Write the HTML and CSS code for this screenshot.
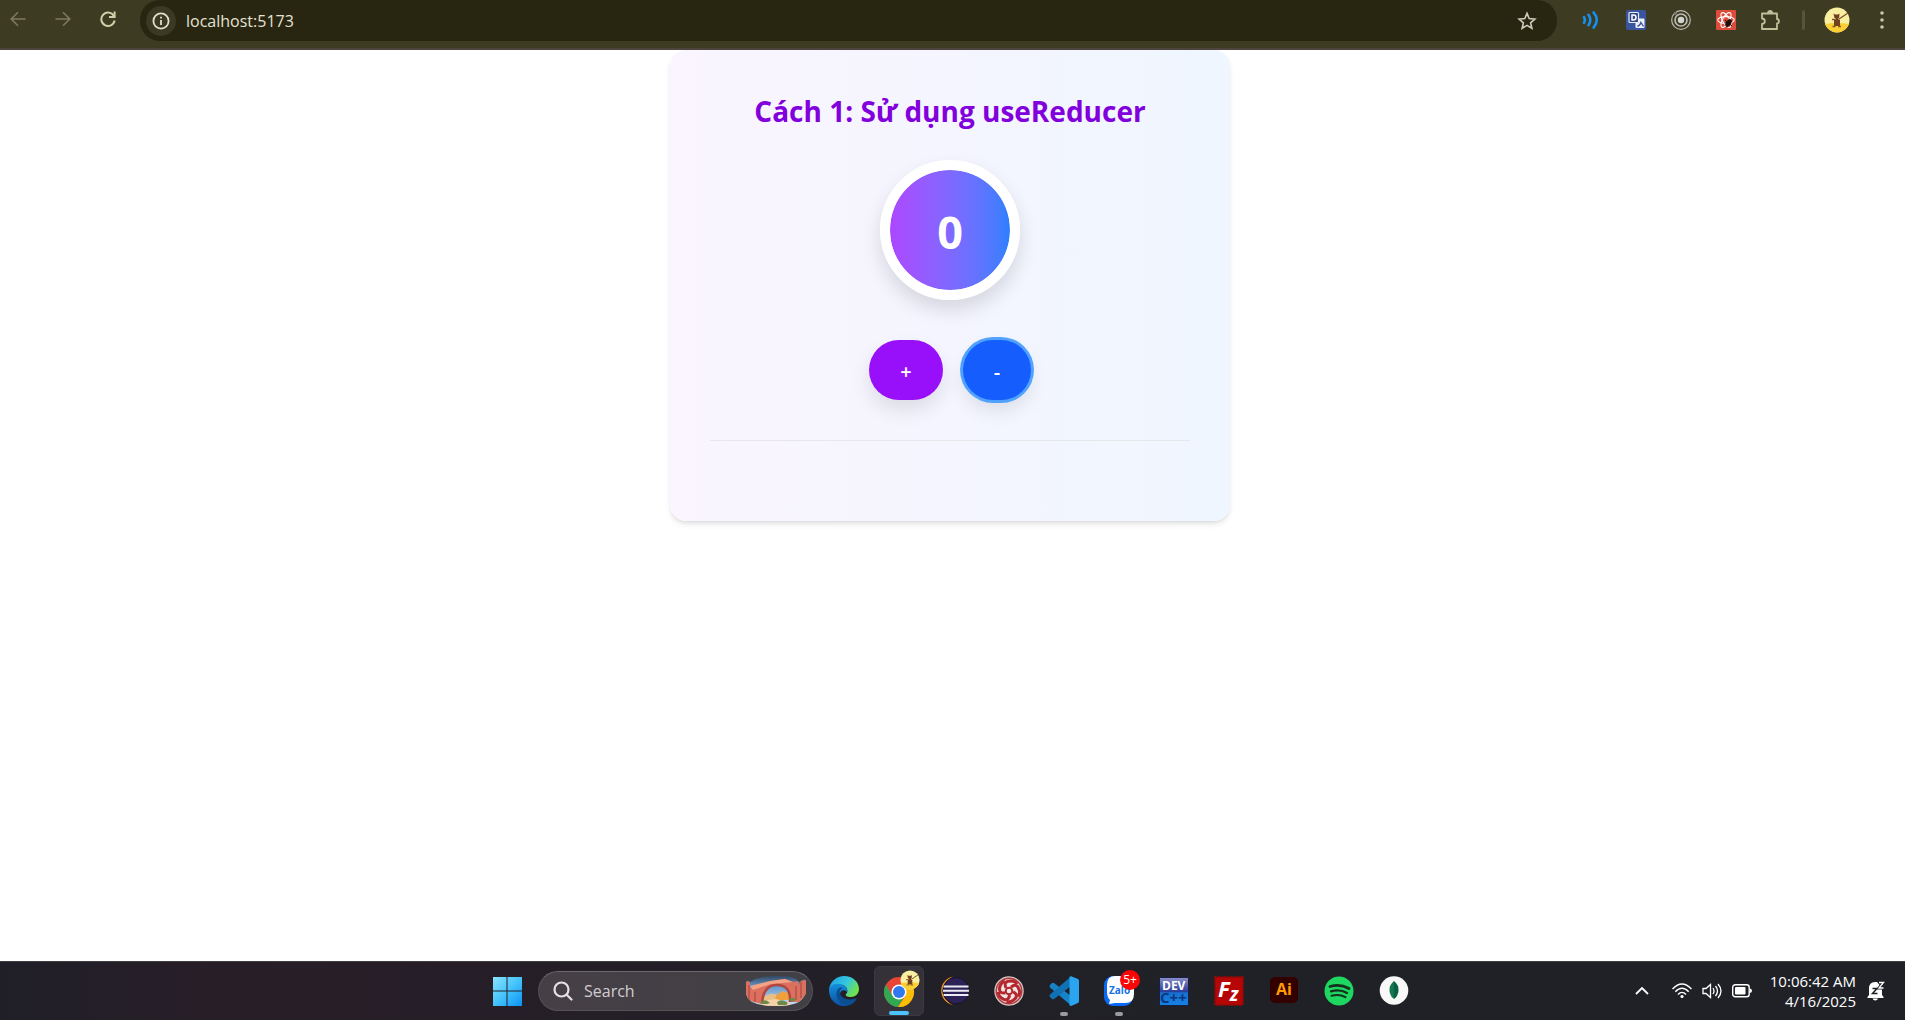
FILE: index.html
```html
<!DOCTYPE html>
<html lang="vi">
<head>
<meta charset="utf-8">
<meta name="viewport" content="width=device-width, initial-scale=1">
<title>localhost:5173</title>
<link rel="stylesheet" href="styles.css">
</head>
<body>
<header class="toolbar">
  <nav class="nav-buttons" aria-label="Navigation">
    <button class="icon-btn dim" aria-label="Back"><svg width="16" height="16" viewBox="0 0 16 16" fill="none" stroke="currentColor" stroke-width="1.6"><path d="M15.5 8H1.5M8 1.2 1.2 8 8 14.8"/></svg></button>
    <button class="icon-btn dim" aria-label="Forward"><svg width="16" height="16" viewBox="0 0 16 16" fill="none" stroke="currentColor" stroke-width="1.6"><path d="M.5 8h14M8 1.2 14.8 8 8 14.8"/></svg></button>
    <button class="icon-btn" aria-label="Reload"><svg width="16" height="16" viewBox="0 0 16 16" fill="none" stroke="currentColor" stroke-width="2"><path d="M14 5.2A6.7 6.7 0 1 0 14.6 9.5"/><path d="M14.6 .5v5.6H9"/></svg></button>
  </nav>
  <div class="address">
    <button class="site-info" aria-label="Site information"><svg width="18" height="18" viewBox="0 0 18 18" fill="none" stroke="currentColor" stroke-width="1.8"><circle cx="9" cy="9" r="7.6"/><path d="M9 8v5M9 4.8v1.8"/></svg></button>
    <input class="url" type="text" value="localhost:5173" aria-label="Address">
    <button class="star" aria-label="Bookmark"><svg width="20" height="20" viewBox="0 0 20 20" fill="none" stroke="currentColor" stroke-width="1.6"><path d="m10 2.4 2.2 5.2 5.7.5-4.3 3.7 1.3 5.5-4.9-2.9-4.9 2.9 1.3-5.5-4.3-3.7 5.7-.5z"/></svg></button>
  </div>
  <div class="extensions">
    <button class="ext" aria-label="Read aloud"><svg width="18" height="18" viewBox="0 0 18 18" fill="none" stroke="#1590ee" stroke-width="2.6" stroke-linecap="round"><path d="M2 6.2q1.700 2.800 0 5.600M6.500 3.800q3.600 5.200 0 10.400M11.600 1.400q6.400 7.600 0 15.200"/></svg></button>
    <button class="ext" aria-label="Translate"><svg width="20" height="20" viewBox="0 0 20 20"><rect width="20" height="20" rx="2" fill="#3a559f"/><rect x="3" y="2.500" width="9.500" height="10" rx="1" fill="#2d4486" stroke="#e8ecf6" stroke-width="1.200"/><path d="M6 5h1.500a2.500 2.500 0 0 1 0 5H6z" fill="none" stroke="#fff" stroke-width="1.500"/><path d="M12.500 8.500h5q1 0 1 1V17q0 1-1 1h-7q-1 0-1-1v-4h3z" fill="#edf0f8"/><path d="M11.500 16.500q3-1.500 3.500-4l2.500 4" stroke="#3a559f" stroke-width="1.400" fill="none"/></svg></button>
    <button class="ext" aria-label="Recorder"><svg width="20" height="20" viewBox="0 0 20 20" fill="none" stroke="#b9b9b4"><circle cx="10" cy="10" r="9.300" stroke-width="1.200"/><circle cx="10" cy="10" r="6" stroke-width="1.700"/><circle cx="10" cy="10" r="3.200" fill="#d4d4d0" stroke="none"/><circle cx="4.500" cy="3.500" r="1.500" fill="#77776e" stroke="none"/></svg></button>
    <button class="ext" aria-label="React tools"><svg width="20" height="20" viewBox="0 0 20 20"><rect width="20" height="20" rx="1" fill="#dd4b3b"/><g fill="none" stroke="#fff" stroke-width="1.100"><ellipse cx="10" cy="10" rx="8.300" ry="3.400"/><ellipse cx="10" cy="10" rx="8.300" ry="3.400" transform="rotate(60 10 10)"/><ellipse cx="10" cy="10" rx="8.300" ry="3.400" transform="rotate(120 10 10)"/></g><ellipse cx="12.500" cy="13" rx="2.400" ry="4.300" transform="rotate(35 12.500 13)" fill="#1c0d0b"/><path d="m9 10 7 6M8.500 13l7-1M11 17l3-6" stroke="#1c0d0b"/></svg></button>
    <button class="ext" aria-label="Extensions"><svg width="21" height="21" viewBox="0 0 21 21" fill="none" stroke="#bfc098" stroke-width="1.800" stroke-linejoin="round"><path d="M2 3.500h15V9q2 .2 2 2.200T17 13.400V19H2v-5q2.800-.3 2.800-2.800T2 8.500z"/><path d="M8 3q.3-2 2.100-2T12.200 3" fill="#bfc098"/></svg></button>
    <span class="separator"></span>
    <button class="ext" aria-label="Profile"><svg width="26" height="26" viewBox="0 0 26 26"><use href="#pet"/></svg></button>
    <button class="ext" aria-label="Menu"><svg width="4" height="18" viewBox="0 0 4 18" fill="#c9caa4"><circle cx="2" cy="2" r="1.800"/><circle cx="2" cy="9" r="1.800"/><circle cx="2" cy="16" r="1.800"/></svg></button>
  </div>
</header>

<main class="page">
  <section class="card">
    <h1 class="title">Cách 1: Sử dụng useReducer</h1>
    <div class="count">0</div>
    <div class="actions">
      <button class="btn btn-plus">+</button>
      <button class="btn btn-minus">-</button>
    </div>
    <hr class="divider">
  </section>
</main>

<footer class="taskbar">
  <div class="apps">
    <button class="app" aria-label="Start"><svg width="30" height="30" viewBox="0 0 30 30"><defs><linearGradient id="win" x2="1" y2="1"><stop stop-color="#8be3ff"/><stop offset=".5" stop-color="#45c3fb"/><stop offset="1" stop-color="#0b93f5"/></linearGradient></defs><path fill="url(#win)" d="M1 1h13.500v13.500H1zM15.500 1H30v13.500H15.500zM1 15.500h13.500V30H1zM15.500 15.500H30V30H15.500z"/></svg></button>
    <label class="search">
      <svg width="20" height="20" viewBox="0 0 20 20" fill="none" stroke="#e4e1e6" stroke-width="2.200"><circle cx="8.500" cy="8.500" r="7"/><path d="m13.500 13.500 5 5" stroke-linecap="round"/></svg>
      <input type="text" placeholder="Search" aria-label="Search">
      <svg width="60" height="30" viewBox="0 0 60 30"><defs><clipPath id="arch"><path d="M0 6q2-3 4 0Q12 1 22 0h16q9 0 14 5l2 1q3-4 6-2v13q-3 7-9 10-8 3-21 3-16 0-24-4-6-4-6-10z"/></clipPath><linearGradient id="sky" x2="0" y2="1"><stop stop-color="#33475f"/><stop offset=".35" stop-color="#6798cc"/><stop offset="1" stop-color="#cfe2f5"/></linearGradient></defs><g clip-path="url(#arch)"><path fill="url(#sky)" d="M0 0h60v30H0z"/><path d="M16 26q0-6 6-7 5-3 10 1v6z" fill="#e9bf85"/><path d="M29 24q1-7 5-7 2-3 5-1 8 2 8 8z" fill="#f0a13d"/><path d="M0 5 4 6v6l22-7 13-2 8 3 5-1 2 5V5l6-1v22H44Q45 9 31 9 17 9 16 28L0 24z" fill="#dc705f"/><path d="M4 10l20-5 15-2 8 3-22 2-18 6z" fill="#f3a283"/><path d="M16 28Q17 9 31 9t13 17" stroke="#b1453f" stroke-width="2.500" fill="none"/><path d="M3 9v15M9 16v10M50 10v14M55 6v16" stroke="#b9504a" stroke-width="1.500" fill="none"/><path d="m14 29 8-5 8-1 14 4v3H14z" fill="#f5d2a8"/><path d="M15 26q4-4 9 1l-3 1h-6zM31 26q5-4 11 1l-2 2h-8zM43 23q5-3 7 1l-4 2z" fill="#6d8847"/></g></svg>
    </label>
    <button class="app" aria-label="Edge"><svg width="30" height="30" viewBox="0 0 30 30"><defs><linearGradient id="edge-a" x2="1" y2=".5"><stop stop-color="#1b9de2"/><stop offset=".6" stop-color="#35c8df"/><stop offset="1" stop-color="#70e24e"/></linearGradient><linearGradient id="edge-b" x2="0" y2="1"><stop stop-color="#1590db"/><stop offset="1" stop-color="#0c4f9f"/></linearGradient></defs><path fill="url(#edge-a)" d="M0 14C1 5 8 0 15 0c9 0 15 6 15 13 0 5-4 8-8 8-4 0-6-1-5-3 1-1 2-2 1-5-1-4-6-5-9-4-5 1-8 4-9 5z"/><path fill="url(#edge-b)" d="M0 15C0 10 5 7 10 8c5 0 9 4 8 8-3-4-8-1-7 4 1 5 8 7 16 4-5 7-15 8-21 3Q0 22 0 15z"/><path fill="#0b4e91" d="M9 13c-4 6 0 15 9 16 4-1 8-3 10-7-8 3-16 1-17-5-1-2 1-4 3-5-2-1-4 0-5 1z"/></svg></button>
    <button class="app active" aria-label="Chrome"><svg width="36" height="40" viewBox="0 0 36 40"><defs><g id="pet"><circle cx="13" cy="13" r="12.500" fill="#f9efa0"/><path d="M1 17q12-2 24 0-4 8.500-12 8.500T1 17z" fill="#f9cf33"/><path d="m15 12 9-6" stroke="#7d4c26" stroke-width="1.200"/><path d="m9.500 6.500 1.500 1h3l1.500-1-.3 4-1.200 1.500 2 1v6H10v-6l2-1-1.700-1.500z" fill="#70401f"/><path d="M8 12.500h3M8.500 19.500h3M14 19.500h3" stroke="#8a5426" stroke-width="1.300"/></g></defs><circle cx="18" cy="21" r="15" fill="#e94335"/><path d="M5 13.500A15 15 0 0 0 17 36l7-12-6 4-7-4z" fill="#31a851"/><path d="M31 13.500A15 15 0 0 1 17 36l8-12-1-10z" fill="#fcbd07"/><circle cx="18" cy="21" r="7.600" fill="#fff"/><circle cx="18" cy="21" r="6" fill="#3079ec"/></svg><svg class="profile-badge" width="20" height="20" viewBox="0 0 26 26"><use href="#pet"/></svg></button>
    <button class="app" aria-label="Eclipse"><svg width="30" height="30" viewBox="0 0 30 30"><path d="M14 .5A14.500 14.500 0 0 0 14 29Q5 25 5 14.800T14 .5z" fill="#f7941e"/><circle cx="17" cy="14.700" r="13.200" fill="#2c2255" stroke="#17142b"/><path d="M4.500 10.500h25M4 14.700h26M4.500 18.900h25" stroke="#eceaf5" stroke-width="2"/></svg></button>
    <button class="app" aria-label="Garena"><svg width="30" height="30" viewBox="0 0 30 30"><circle cx="15" cy="15" r="14.700" fill="#d9cbcb"/><circle cx="15" cy="15" r="12.800" fill="none" stroke="#b0383c" stroke-width="1.400"/><circle cx="15" cy="15" r="11" fill="#eee5e5"/><g fill="none" stroke="#b5272d" stroke-width="3"><circle cx="15" cy="15" r="3.300" stroke-width="2"/><path id="blade" d="M12 12Q9 5 17 5q4 0 6 3"/><use href="#blade" transform="rotate(72 15 15)"/><use href="#blade" transform="rotate(144 15 15)"/><use href="#blade" transform="rotate(216 15 15)"/><use href="#blade" transform="rotate(288 15 15)"/></g></svg></button>
    <button class="app running" aria-label="Visual Studio Code"><svg width="30" height="30" viewBox="0 0 30 30"><path d="m1 9 2-2q1-.5 2 0l17 13v9.500L1 11.500q-1-1.500 0-2.500z" fill="#1683c9"/><path d="m1 21 2 2q1 .5 2 0l17-13V.5L1 18.500q-1 1.500 0 2.500z" fill="#1071b5"/><path d="M22 .2 29 3q1 .5 1 2v20q0 1.500-1 2l-7 3q-2 0-1.500-2V2q-.5-2 1.500-1.800z" fill="#2ba5ef"/></svg></button>
    <button class="app running" aria-label="Zalo"><svg width="30" height="30" viewBox="0 0 30 30"><rect width="29" height="30" rx="9" fill="#0869f5"/><path d="M11 0h10q9 0 9 9v9q0 9-9 9H11l-6 1 1-4q-3-3-3-8V9q0-9 8-9z" fill="#fff"/><text class="logo-text" x="5" y="18" font-size="10" fill="#1671e8">Zalo</text></svg><span class="badge">5+</span></button>
    <button class="app" aria-label="Dev-C++"><svg width="30" height="30" viewBox="0 0 30 30"><defs><linearGradient id="dev" x2="0" y2="1"><stop stop-color="#8e90c8"/><stop offset=".5" stop-color="#2a3e9b"/><stop offset=".55" stop-color="#1770d1"/><stop offset="1" stop-color="#1581e5"/></linearGradient></defs><path fill="url(#dev)" stroke="#17203f" d="M.5 1.500h29v28H.5z"/><text class="logo-text" x="3" y="14" font-size="12" fill="#fff">DEV</text><text class="logo-text" x="1" y="27" font-size="15" fill="#0c367b">C++</text></svg></button>
    <button class="app" aria-label="FileZilla"><svg width="30" height="30" viewBox="0 0 30 30"><path d="M1 1h28v28H1z" fill="#b50505" stroke="#8d0808" stroke-width="2" stroke-dasharray="2 1"/><text class="logo-text" x="4" y="21" font-size="22" font-style="italic" fill="#fff">F<tspan dy="4" font-size="19">z</tspan></text></svg></button>
    <button class="app" aria-label="Illustrator"><svg width="28" height="28" viewBox="0 0 28 28"><rect width="28" height="26" rx="5" fill="#330000"/><text class="logo-text" x="6" y="18" font-size="16" fill="#ff9a00">Ai</text></svg></button>
    <button class="app" aria-label="Spotify"><svg width="30" height="30" viewBox="0 0 30 30"><circle cx="15" cy="15" r="14.500" fill="#1ed760"/><g fill="none" stroke="#15301f" stroke-linecap="round"><path d="M6 10.500q10-3 19 2" stroke-width="2.800"/><path d="M7 15.300q9-2.500 16 1.700" stroke-width="2.300"/><path d="M7.500 19.800q8-2 14 1.400" stroke-width="2"/></g></svg></button>
    <button class="app" aria-label="MongoDB"><svg width="30" height="30" viewBox="0 0 30 30"><circle cx="15" cy="14.500" r="14.300" fill="#f8f8f8"/><path d="M15 5q-5 4-4.500 10 .5 5 4.500 8z" fill="#10774f"/><path d="M15 5q5 4 4.500 10-.5 5-4.500 8z" fill="#076044"/></svg></button>
  </div>
  <div class="tray">
    <button class="tray-btn" aria-label="Show hidden icons"><svg width="14" height="8" viewBox="0 0 14 8" fill="none" stroke="#fff" stroke-width="1.800"><path d="m1 7 6-6 6 6"/></svg></button>
    <button class="tray-btn status" aria-label="Network, volume, battery">
      <svg width="20" height="16" viewBox="0 0 20 16" fill="none" stroke="#fff" stroke-width="1.400"><path d="M.5 6Q10-4 19.500 6M3.300 8.800q6.700-7 13.400 0M6 11.500q4-4.300 8 0"/><circle cx="10" cy="13.500" r="1.600" fill="#fff" stroke="none"/></svg>
      <svg width="20" height="16" viewBox="0 0 20 16" fill="none" stroke="#fff" stroke-width="1.300"><path d="M1 5.500h3L8.500 1.500v13L4 10.500H1zM11 5q2 3 0 6M13.500 3q4 5 0 10M16 1q6 7 0 14"/></svg>
      <svg width="20" height="14" viewBox="0 0 20 14"><rect x=".7" y=".7" width="16.500" height="12" rx="2.500" fill="none" stroke="#fff" stroke-width="1.400"/><rect x="3" y="3" width="10.500" height="7.500" rx="1" fill="#fff"/><path d="M18 4.500q2 .3 2 2.200t-2 2.300z" fill="#fff"/></svg>
    </button>
    <button class="tray-btn clock"><time>10:06:42 AM</time><time>4/16/2025</time></button>
    <button class="tray-btn" aria-label="Notifications"><svg width="18" height="20" viewBox="0 0 18 20"><path d="M2 14V7.500Q2 1 8 1h2l5 6v7l1.500 2v1H.5v-1zM5.500 17.500h5.500q-.5 2-2.700 2t-2.800-2z" fill="#fff"/><path d="M5.500 7.500H10L5.500 12.500h5" stroke="#202127" stroke-width="1.500" fill="none"/><path d="M12 1.500h4.500L12 7h4.500" stroke="#202127" stroke-width="3" fill="none"/><path d="M12 1.500h4.500L12 7h4.500" stroke="#fff" stroke-width="1.300" fill="none"/></svg></button>
  </div>
</footer>
</body>
</html>
```
FILE: styles.css
```css
* {
  box-sizing: border-box;
}

body {
  margin: 0;
  min-height: 100vh;
  display: flex;
  flex-direction: column;
  background: #fff;
  font-family: "Open Sans", "Noto Sans", sans-serif;
}

button,
input {
  margin: 0;
  padding: 0;
  border: 0;
  background: none;
  color: inherit;
  font: inherit;
}

svg {
  display: block;
  flex: none;
}

/* Browser toolbar */
.toolbar {
  display: flex;
  align-items: flex-start;
  height: 50px;
  padding-right: 1px;
  background: #3d3b22;
  border-bottom: 2px solid #4c443d;
  color: #cfd0aa;
}

.nav-buttons {
  display: flex;
  gap: 10px;
  margin-right: 15px;
}

.icon-btn {
  display: grid;
  place-items: center;
  width: 35px;
  height: 38px;
}

.dim {
  color: #7d7a62;
}

.address {
  flex: 1;
  display: flex;
  align-items: center;
  height: 41px;
  padding: 0 20px 0 6px;
  margin-right: 11px;
  border-radius: 20px;
  background: #282611;
}

.site-info {
  display: grid;
  place-items: center;
  width: 30px;
  height: 30px;
  margin-right: 10px;
  border-radius: 50%;
  background: #3b3923;
  color: #e0dfc8;
}

.url {
  flex: 1;
  min-width: 0;
  color: #e4e2d0;
  font-size: 16px;
  line-height: 24px;
}

.star {
  color: #cccabb;
}

.extensions {
  display: flex;
  align-items: center;
  height: 40px;
}

.ext {
  display: grid;
  place-items: center;
  width: 45px;
  height: 40px;
}

.separator {
  width: 3px;
  height: 20px;
  margin: 0 9px;
  border-radius: 2px;
  background: #56543a;
}

/* Counter page */
.page {
  flex: 1;
  padding-right: 5px;
}

.card {
  width: 560px;
  max-width: 100%;
  margin: 0 auto;
  padding: 40px 40px 80px;
  border-radius: 16px;
  background: linear-gradient(to right in oklab, #faf5ff, #eff6ff);
  box-shadow: 0 4px 6px -1px rgba(0, 0, 0, 0.1), 0 2px 4px -2px rgba(0, 0, 0, 0.1);
  text-align: center;
}

.title {
  margin: 0 0 28px;
  color: #8200db;
  font-size: 28px;
  line-height: 42px;
  font-weight: 700;
}

.count {
  display: flex;
  align-items: center;
  justify-content: center;
  width: 140px;
  height: 140px;
  margin: 0 auto 40px;
  padding-top: 4px;
  border: 10px solid #fff;
  border-radius: 50%;
  background: linear-gradient(to right in oklab, #ad46ff, #2b7fff) padding-box;
  box-shadow: 0 10px 20px rgba(0, 0, 0, 0.13);
  color: #fff;
  font-size: 45px;
  line-height: 60px;
  font-weight: 700;
}

.actions {
  display: flex;
  justify-content: center;
  gap: 20px;
  margin-bottom: 40px;
}

.btn {
  height: 60px;
  padding-top: 2px;
  border-radius: 30px;
  box-shadow: 0 10px 20px rgba(0, 0, 0, 0.1);
  color: #fff;
  font-size: 20px;
  font-weight: 600;
}

.btn-plus {
  width: 74px;
  background: #9810fa;
}

.btn-minus {
  width: 68px;
  background: #155dfc;
  box-shadow: 0 0 0 3px #51a2ff, 0 10px 20px rgba(0, 0, 0, 0.1);
}

.divider {
  margin: 0;
  border: 0;
  border-top: 1px solid #e5e7eb;
}

/* Desktop taskbar */
.taskbar {
  display: grid;
  grid-template-columns: 1fr auto 1fr;
  align-items: center;
  height: 59px;
  padding-right: 4px;
  border-top: 1px solid #3f3f45;
  background: linear-gradient(to right, #201f27, #281e28 12%, #221f27 45%, #202127 60%);
  color: #fff;
}

.apps {
  grid-column: 2;
  display: flex;
  align-items: center;
  gap: 5px;
}

.app {
  position: relative;
  display: grid;
  place-items: center;
  width: 50px;
  height: 50px;
  border-radius: 6px;
}

.active {
  background: #353139;
  border: 1px solid #3d3941;
}

.active::after,
.running::after {
  content: "";
  position: absolute;
  bottom: 0;
  left: 50%;
  width: 8px;
  height: 4px;
  margin-left: -4px;
  border-radius: 2px;
  background: #9b9b9f;
}

.active::after {
  width: 20px;
  margin-left: -10px;
  background: #4cc2ff;
}

.profile-badge {
  position: absolute;
  top: 3px;
  right: 3px;
}

.badge {
  position: absolute;
  top: 4px;
  right: 4px;
  width: 20px;
  height: 20px;
  border-radius: 50%;
  background: #f90606;
  font-size: 12px;
  line-height: 20px;
  text-align: center;
}

.logo-text {
  font-family: "Open Sans", sans-serif;
  font-weight: 700;
}

.search {
  display: flex;
  align-items: center;
  gap: 11px;
  width: 275px;
  height: 40px;
  padding: 0 6px 0 14px;
  margin: 0 1px;
  border: 1px solid #565157;
  border-top-color: #6c666e;
  border-radius: 20px;
  background: linear-gradient(to right, #463f46, #414045);
}

.search input {
  flex: 1;
  min-width: 0;
  font-size: 16px;
  line-height: 24px;
}

.search input::placeholder {
  color: #d0cdd2;
  opacity: 1;
}

.tray {
  display: flex;
  align-items: center;
  justify-content: flex-end;
  padding-right: 16px;
}

.tray-btn {
  display: flex;
  align-items: center;
}

.status {
  gap: 10px;
  margin: 0 18px 0 23px;
}

.clock {
  flex-direction: column;
  align-items: flex-end;
  margin-right: 11px;
  font-size: 15px;
  line-height: 20px;
}
```
